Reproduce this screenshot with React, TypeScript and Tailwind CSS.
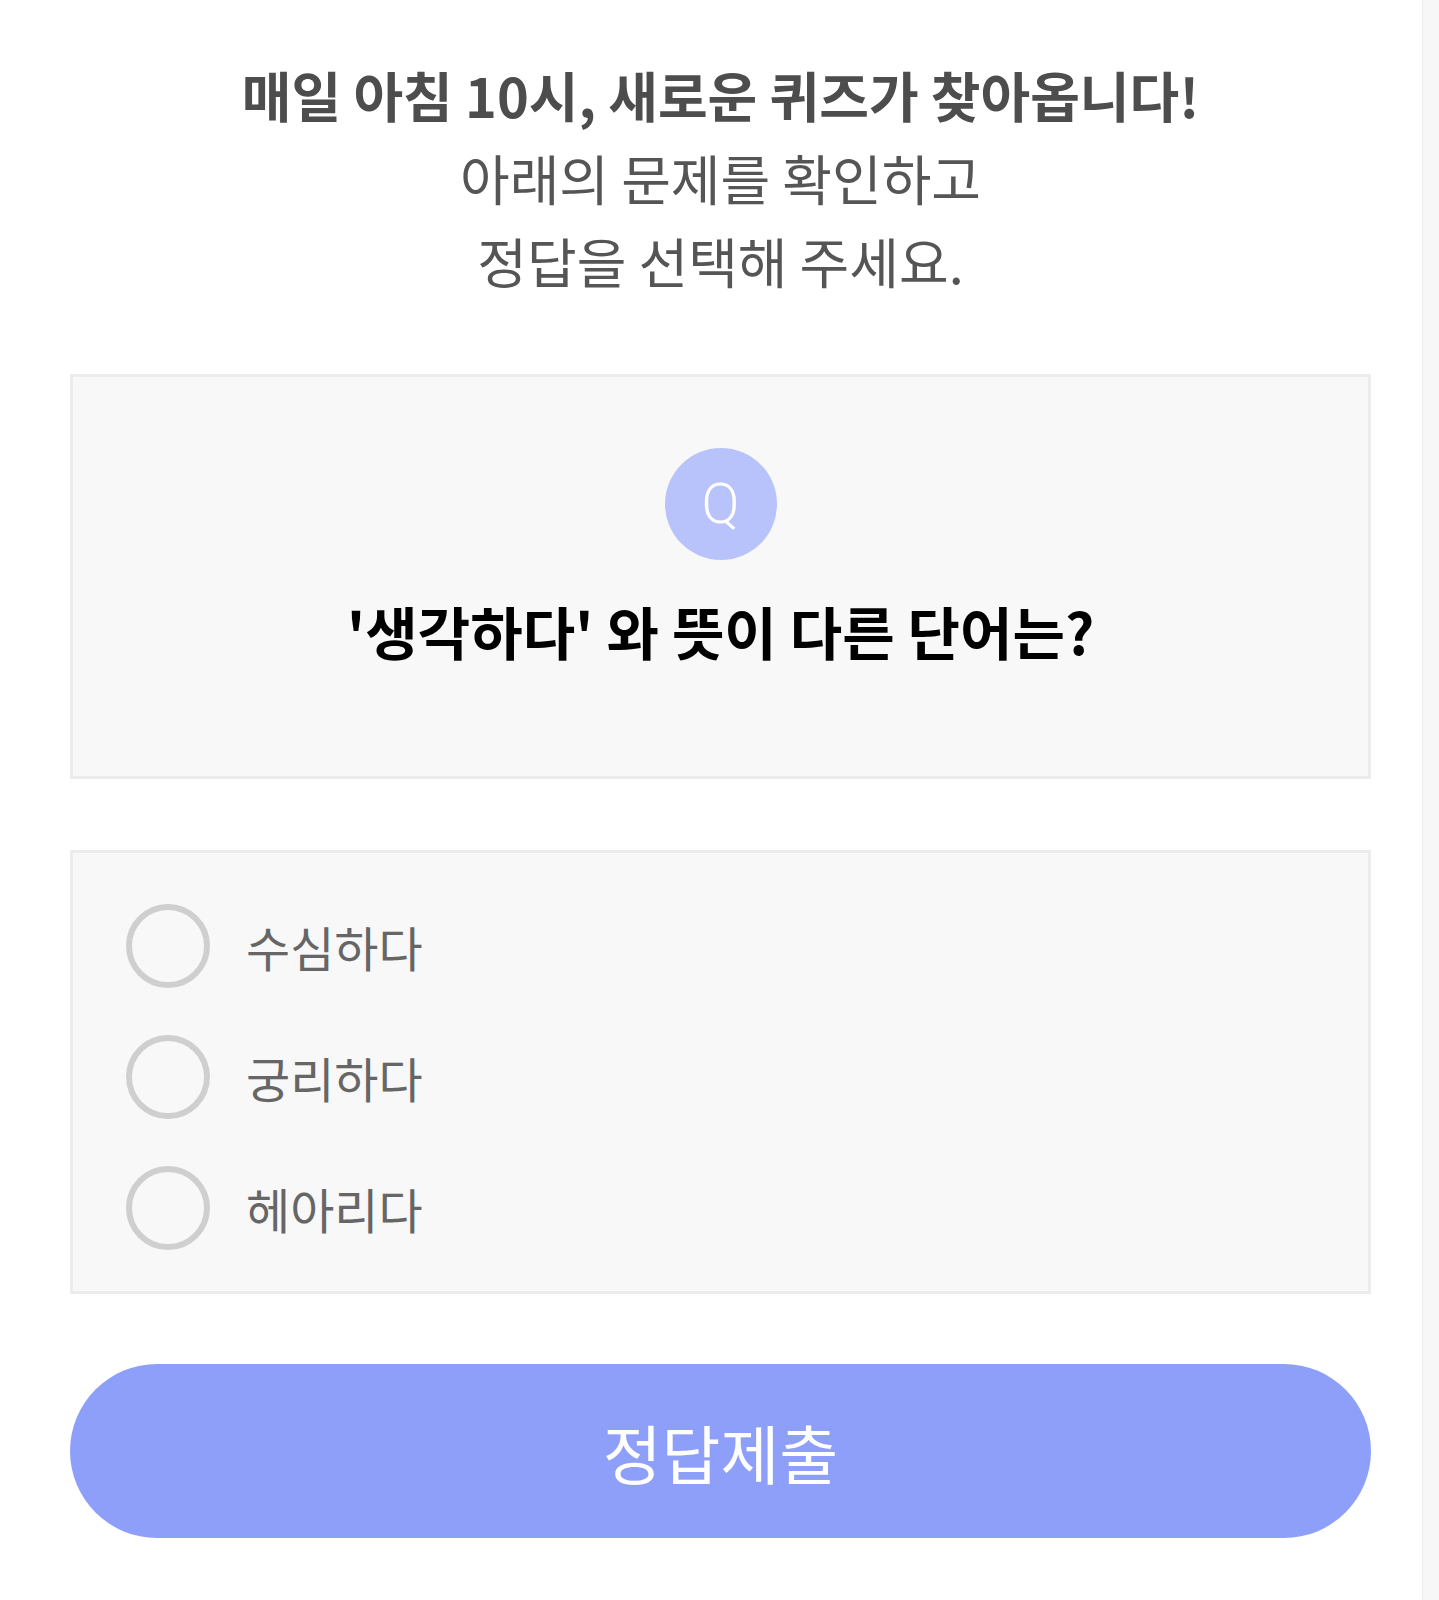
import { useState } from "react";

const options = ["수심하다", "궁리하다", "헤아리다"];

export default function App() {
  return (
    <div className="flex min-h-[1600px] w-full bg-white font-['Noto_Sans_CJK_KR',sans-serif]">
      <main className="flex-1 pl-[70px] pr-[51px]">
        <Intro />
        <QuestionCard />
        <Options />
        <button
          type="button"
          className="mt-[70px] flex h-[174px] w-full items-center justify-center rounded-full bg-[#8e9ffa] text-[64px] text-white"
        >
          정답제출
        </button>
      </main>
      <div className="w-[17px] shrink-0 border-l border-[#ececec] bg-[#f7f7f7]" />
    </div>
  );
}

function Intro() {
  return (
    <div className="pt-[53px] text-center text-[54px] leading-[83px] text-[#555]">
      <p className="font-bold text-[#4d4d4d]">매일 아침 10시, 새로운 퀴즈가 찾아옵니다!</p>
      <p>아래의 문제를 확인하고</p>
      <p>정답을 선택해 주세요.</p>
    </div>
  );
}

function QuestionCard() {
  return (
    <div className="mt-[72px] flex h-[405px] flex-col items-center border-[3px] border-[#ececec] bg-[#f8f8f8] pt-[71px]">
      <div className="flex h-[112px] w-[112px] items-center justify-center rounded-full bg-[#b8c2fb] font-['Roboto',sans-serif] text-[56px] font-light text-white">
        Q
      </div>
      <p className="mt-[30px] text-[57px] font-bold leading-[80px] text-black">
        '생각하다' 와 뜻이 다른 단어는?
      </p>
    </div>
  );
}

function Options() {
  const [picked, setPicked] = useState<number | null>(null);
  return (
    <div className="mt-[71px] flex flex-col gap-[47px] border-[3px] border-[#ececec] bg-[#f8f8f8] pb-[41px] pl-[53px] pt-[51px]">
      {options.map((label, i) => (
        <label key={label} className="flex cursor-pointer items-center gap-[36px]" onClick={() => setPicked(i)}>
          <span className="flex h-[84px] w-[84px] shrink-0 items-center justify-center rounded-full border-[6px] border-[#cfcfcf]">
            {picked === i && <span className="h-[40px] w-[40px] rounded-full bg-[#8e9ffa]" />}
          </span>
          <span className="text-[48px] text-[#666]">{label}</span>
        </label>
      ))}
    </div>
  );
}
